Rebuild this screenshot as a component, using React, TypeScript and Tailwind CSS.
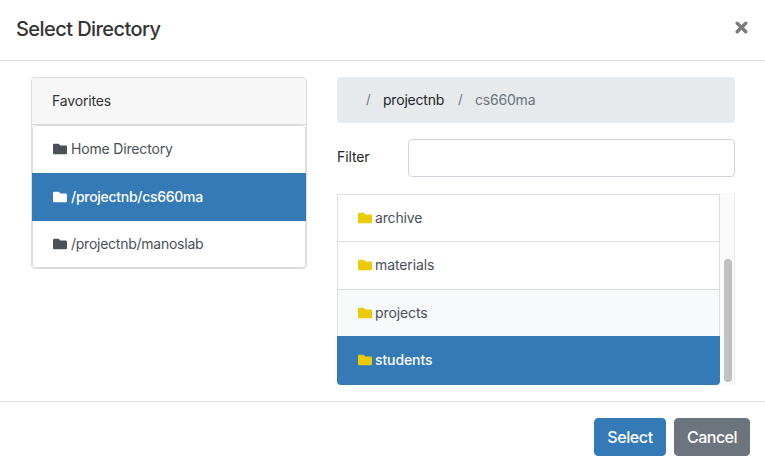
import React from "react";

function Folder({ className = "" }: { className?: string }) {
  return (
    <svg viewBox="0 0 512 512" className={"mt-1 h-[14px] w-[14px] shrink-0 " + className} fill="currentColor" aria-hidden="true">
      <path d="M464 128H272l-64-64H48C21.490 64 0 85.490 0 112v288c0 26.510 21.490 48 48 48h416c26.510 0 48-21.490 48-48V176c0-26.510-21.490-48-48-48z" />
    </svg>
  );
}

export default function App() {
  return (
    <div className="flex h-[471px] w-[765px] flex-col overflow-hidden bg-white font-['Inter','Liberation_Sans',sans-serif] text-sm leading-[21px] text-[#212529]">
      <header className="flex h-[61px] shrink-0 items-start justify-between border-b border-[#dee2e6] pt-[14px] pr-[17px] pl-4">
        <h5 className="text-xl leading-[30px] font-medium tracking-[-0.57px] text-[#333]">Select Directory</h5>
        <button aria-label="Close" className="mt-[7px] text-[#7b7b7b]">
          <svg viewBox="0 0 13 13" className="h-[13px] w-[13px]" fill="none" stroke="currentColor" strokeWidth="3.4" strokeLinecap="round">
            <path d="M2.200 2.200L10.800 10.800M10.800 2.200L2.200 10.800" />
          </svg>
        </button>
      </header>

      <main className="flex h-[340px] shrink-0 items-start gap-[30px] pt-4 pl-[31px]">
        <section className="w-[276px] rounded border border-[#dcdcdc]">
          <div className="h-[47px] rounded-t-[3px] border-b border-[#d9d9d9] bg-[#f7f7f7] px-5 pt-3 tracking-[-0.15px] text-[#333]">Favorites</div>
          <ul className="rounded border border-[#dcdcdc] text-[#495057]">
            <li className="flex h-[47px] gap-1 px-5 pt-3 tracking-[-0.17px]"><Folder />Home Directory</li>
            <li className="-mx-px flex h-12 gap-1 bg-[#337ab7] px-[21px] pt-[13px] font-[450] tracking-[-0.28px] text-white"><Folder />/projectnb/cs660ma</li>
            <li className="flex h-[46px] gap-1 px-5 pt-3 tracking-[-0.25px]"><Folder />/projectnb/manoslab</li>
          </ul>
        </section>

        <section className="w-[398px]">
          <nav className="flex h-[46px] rounded bg-[#e7eaed] pt-3 pl-[29px] tracking-[-0.2px] text-[#6c757d]">
            <span className="w-[17px] text-[13px] leading-5">/</span>
            <a className="w-[75px] text-[#212529]">projectnb</a>
            <span className="w-[17px] text-[13px] leading-5">/</span>
            <span>cs660ma</span>
          </nav>
          <div className="mt-4 flex h-[38px]">
            <label htmlFor="filter" className="w-[71px] pt-[7px] tracking-[-0.1px]">Filter</label>
            <input id="filter" className="h-[38px] w-[327px] rounded border border-[#ced4da] bg-white px-3 outline-none" />
          </div>
          <div className="mt-4 flex h-[192px]">
            <ul className="mt-px w-[383px] overflow-hidden rounded-b tracking-[-0.1px] text-[#495057]">
              <li className="flex h-[47px] gap-[3px] border border-b-0 border-[#dcdfe2] px-5 pt-3"><Folder className="text-[#ebcb07]" /><span className="tracking-[-0.17px]">archive</span></li>
              <li className="flex h-12 gap-[3px] border border-b-0 border-[#dcdfe2] px-5 pt-3"><Folder className="text-[#ebcb07]" />materials</li>
              <li className="flex h-[47px] gap-[3px] border border-b-0 border-[#dcdfe2] bg-[#f8f9fa] px-5 pt-3"><Folder className="text-[#ebcb07]" />projects</li>
              <li className="flex h-[49px] gap-[3px] bg-[#337ab7] px-[21px] pt-[13px] font-[450] text-white"><Folder className="text-[#ebcb07]" />students</li>
            </ul>
            <div className="flex w-[15px] items-end justify-end border-r border-[#ececec] bg-[#fafafa] pr-[2px] pb-[3px]">
              <div className="h-[123px] w-2 rounded-full bg-[#c1c1c1]" />
            </div>
          </div>
        </section>
      </main>

      <footer className="flex h-[70px] items-start justify-end gap-2 border-t border-[#dee2e6] pt-4 pr-[15px] text-base leading-6 font-[450] text-white">
        <button className="h-[38px] w-[72px] rounded border border-[#337ab7] bg-[#337ab7] tracking-[-0.4px]">Select</button>
        <button className="h-[38px] w-[76px] rounded border border-[#6c757d] bg-[#6c757d] tracking-[-0.5px]">Cancel</button>
      </footer>
    </div>
  );
}
